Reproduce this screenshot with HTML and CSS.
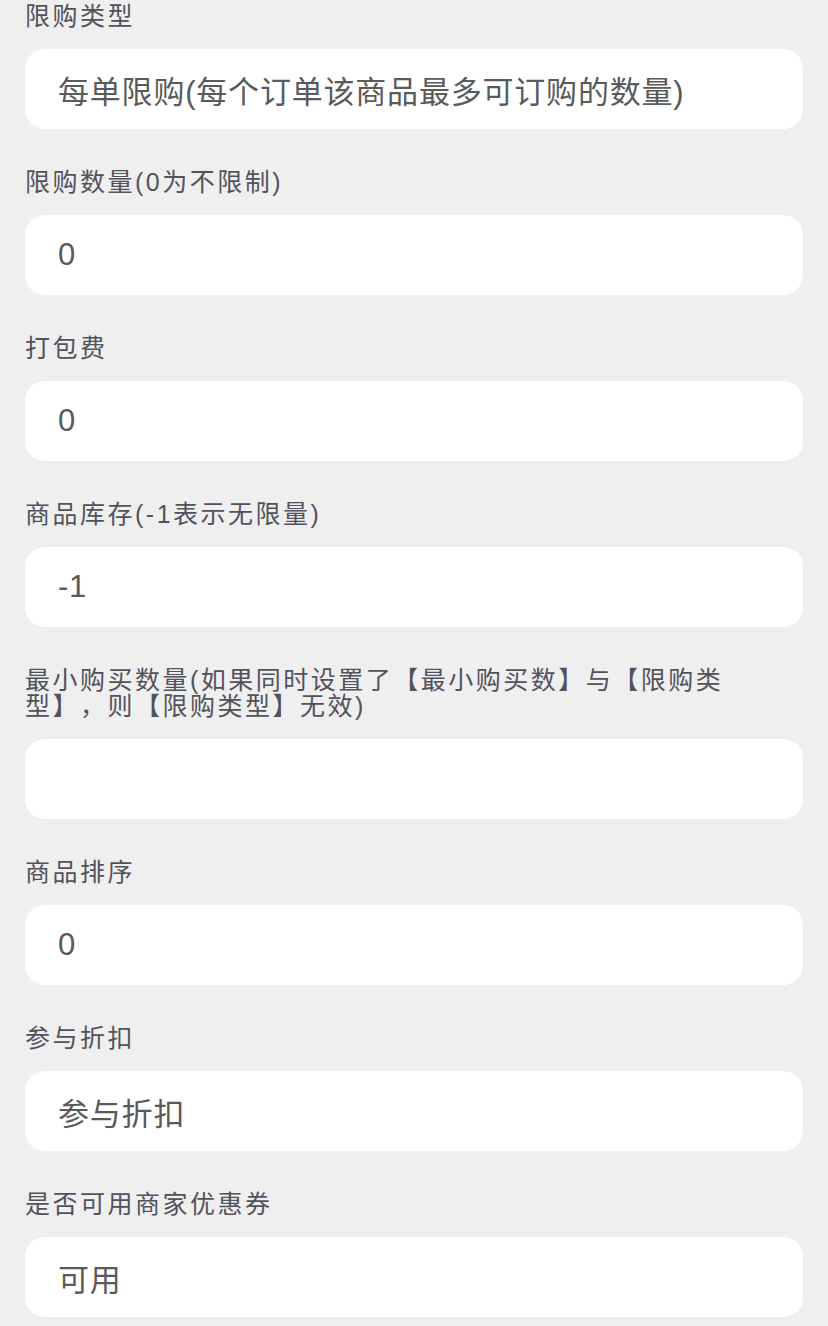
FILE: index.html
```html
<!DOCTYPE html>
<html lang="zh-CN">
<head>
    <meta charset="UTF-8">
    <meta name="viewport" content="width=device-width, initial-scale=1.0">
    <title>商品设置</title>
    <link rel="stylesheet" href="styles.css">
</head>
<body>

    <div class="form">
        <div class="field">
            <div class="field-label">限购类型</div>
            <div class="field-box">每单限购(每个订单该商品最多可订购的数量)</div>
        </div>
        <div class="field">
            <div class="field-label">限购数量(0为不限制)</div>
            <div class="field-box">0</div>
        </div>
        <div class="field">
            <div class="field-label">打包费</div>
            <div class="field-box">0</div>
        </div>
        <div class="field">
            <div class="field-label">商品库存(-1表示无限量)</div>
            <div class="field-box">-1</div>
        </div>
        <div class="field">
            <div class="field-label">最小购买数量(如果同时设置了【最小购买数】与【限购类型】，则【限购类型】无效)</div>
            <div class="field-box"></div>
        </div>
        <div class="field">
            <div class="field-label">商品排序</div>
            <div class="field-box">0</div>
        </div>
        <div class="field">
            <div class="field-label">参与折扣</div>
            <div class="field-box">参与折扣</div>
        </div>
        <div class="field">
            <div class="field-label">是否可用商家优惠券</div>
            <div class="field-box">可用</div>
        </div>
    </div>

</body>
</html>
```

FILE: styles.css
```css
* {
    box-sizing: border-box;
    margin: 0;
    padding: 0;
}

body {
    font-family: "Liberation Sans", "Noto Sans CJK SC", sans-serif;
    background-color: #efefef;
    color: #555;
}

.form {
    padding: 3px 25px 0 25px;
}

.field {
    margin-bottom: 40px;
}

.field-label {
    font-size: 25px;
    line-height: 26px;
    letter-spacing: 2.5px;
    color: #52525c;
    margin-bottom: 20px;
    padding-right: 20px;
    text-spacing-trim: space-all;
}

.field-box {
    height: 80px;
    background-color: #fff;
    border-radius: 20px;
    padding: 0 33px;
    display: flex;
    align-items: center;
    font-size: 31px;
    letter-spacing: 0.8px;
    color: #5a5a5a;
}
```
